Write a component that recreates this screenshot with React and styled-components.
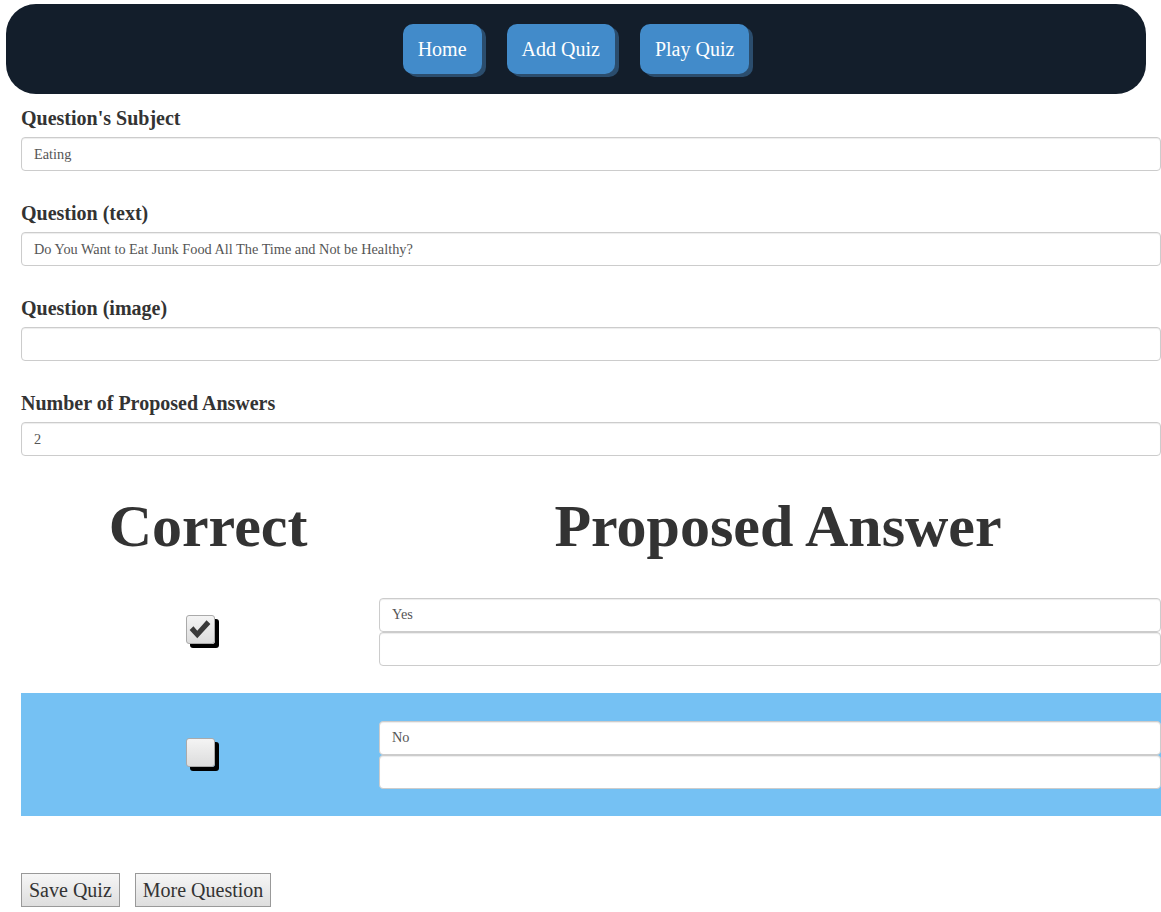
import React from "react";
import styled, { createGlobalStyle } from "styled-components";

const Global = createGlobalStyle`
  html, body { margin: 0; padding: 0; background: #fff; }
  body { font-family: "Liberation Serif", "Times New Roman", serif; color: #333; }
  * { box-sizing: border-box; }
`;

const Page = styled.div`
  padding: 4px 0 0 0;
`;

const Nav = styled.nav`
  margin-left: 6px;
  width: 1140px;
  height: 90px;
  background: #131e2b;
  border-radius: 30px;
  display: flex;
  align-items: center;
  justify-content: center;
  gap: 25px;
`;

const NavButton = styled.a`
  display: flex;
  align-items: center;
  height: 50px;
  padding: 0 15px;
  background: #428bca;
  color: #fff;
  font-size: 20px;
  border-radius: 10px;
  box-shadow: 4px 3px 0 #2b4d6d;
  text-decoration: none;
`;

const Form = styled.div`
  padding: 13px 0 0 21px;
`;

const Group = styled.div`
  margin-bottom: 31px;
`;

const Label = styled.label`
  display: block;
  font-weight: bold;
  font-size: 20px;
  line-height: 23px;
  margin-bottom: 7px;
  color: #333;
`;

const Input = styled.input`
  display: block;
  width: 100%;
  height: 34px;
  border: 1px solid #ccc;
  border-radius: 4px;
  padding: 0 12px;
  font-family: "Liberation Serif", "Times New Roman", serif;
  font-size: 14.3px;
  color: #555;
  background: #fff;
  box-shadow: inset 0 1px 1px rgba(0,0,0,0.075);
  outline: none;
`;

const Table = styled.div`
  padding-top: 4px;
`;

const HeadRow = styled.div`
  display: grid;
  grid-template-columns: 358px 1fr;
  height: 79px;
  padding-top: 1px;
`;

const Heading = styled.h1`
  margin: 0;
  font-size: 60px;
  font-weight: bold;
  line-height: 69px;
  text-align: center;
  color: #333;
  padding-left: ${p => p.$shift}px;
`;

const Row = styled.div`
  display: grid;
  grid-template-columns: 358px 1fr;
  height: 123px;
  align-items: center;
  background: ${p => (p.$highlight ? "#75c1f3" : "transparent")};
`;

const CheckCell = styled.div`
  display: flex;
  justify-content: center;
  padding-bottom: 5px;
`;

const CheckBox = styled.span`
  position: relative;
  width: 29px;
  height: 29px;
  border: 1px solid #aaa;
  border-radius: 3px;
  background: linear-gradient(#f4f4f4, #dcdcdc);
  box-shadow: 4px 4px 0 #000;
  display: flex;
  align-items: center;
  justify-content: center;
`;

const Answers = styled.div`
  display: flex;
  flex-direction: column;
`;

const Bottom = styled.div`
  display: flex;
  gap: 15px;
  margin-top: 57px;
`;

const Button = styled.button`
  height: 34px;
  padding: 0 7px;
  font-family: "Liberation Serif", "Times New Roman", serif;
  font-size: 20px;
  color: #333;
  border: 1px solid #999;
  border-radius: 0;
  background: linear-gradient(#f6f6f6, #dedede);
`;

const Check = () => (
  <svg width="24" height="22" viewBox="0 0 22 20">
    <path d="M1.5 11 L5 7.5 L8.5 11.5 L17 2 L20.5 5.5 L8.5 18.5 Z" fill="#3a3a3a" />
  </svg>
);

export default function App() {
  return (
    <Page>
      <Global />
      <Nav>
        <NavButton>Home</NavButton>
        <NavButton>Add Quiz</NavButton>
        <NavButton>Play Quiz</NavButton>
      </Nav>
      <Form>
        <Group>
          <Label>Question's Subject</Label>
          <Input defaultValue="Eating" />
        </Group>
        <Group>
          <Label>Question (text)</Label>
          <Input defaultValue="Do You Want to Eat Junk Food All The Time and Not be Healthy?" />
        </Group>
        <Group>
          <Label>Question (image)</Label>
          <Input defaultValue="" />
        </Group>
        <Group>
          <Label>Number of Proposed Answers</Label>
          <Input defaultValue="2" />
        </Group>
        <Table>
          <HeadRow>
            <Heading $shift={16}>Correct</Heading>
            <Heading $shift={16}>Proposed Answer</Heading>
          </HeadRow>
          <Row>
            <CheckCell>
              <CheckBox><Check /></CheckBox>
            </CheckCell>
            <Answers>
              <Input defaultValue="Yes" />
              <Input defaultValue="" />
            </Answers>
          </Row>
          <Row $highlight>
            <CheckCell>
              <CheckBox />
            </CheckCell>
            <Answers>
              <Input defaultValue="No" />
              <Input defaultValue="" />
            </Answers>
          </Row>
        </Table>
        <Bottom>
          <Button>Save Quiz</Button>
          <Button>More Question</Button>
        </Bottom>
      </Form>
    </Page>
  );
}
